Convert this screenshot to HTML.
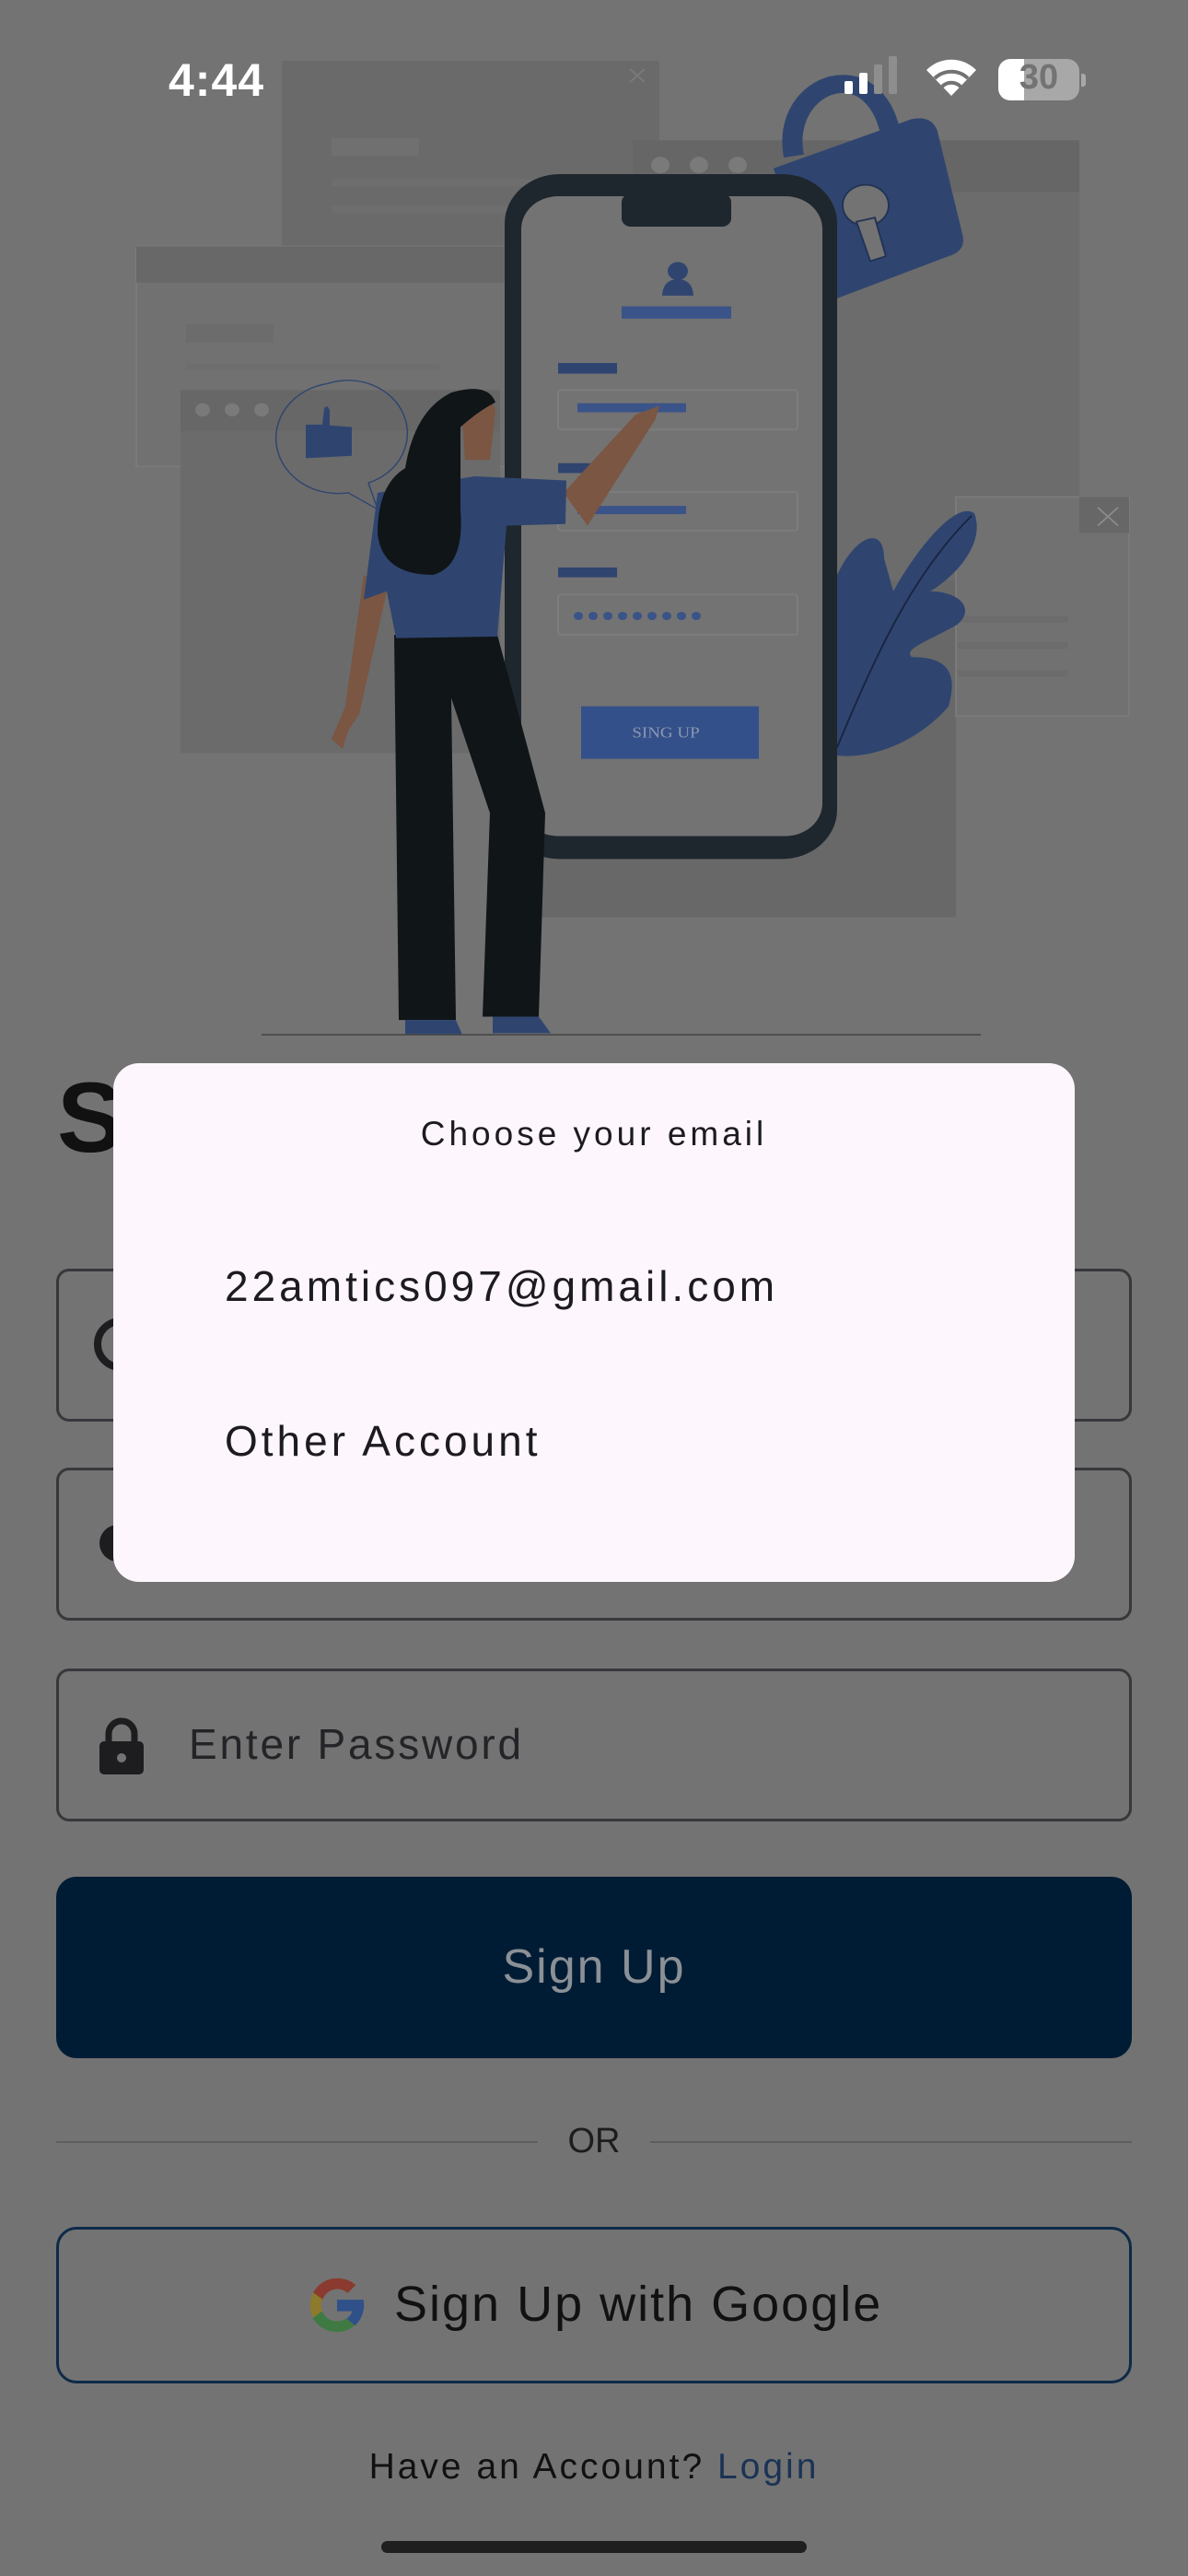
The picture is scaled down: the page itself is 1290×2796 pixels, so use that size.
<!DOCTYPE html>
<html><head><meta charset="utf-8"><style>
*{margin:0;padding:0;box-sizing:border-box}
body{width:1290px;height:2796px;background:#737373;position:relative;overflow:hidden;font-family:"Liberation Sans",sans-serif}
.abs{position:absolute}
.field{position:absolute;left:61px;width:1168px;border:3px solid #38383c;border-radius:14px}
</style></head><body>
<svg class="abs" style="left:0;top:0" width="1290" height="1300" viewBox="0 0 1290 1300">
<g transform="scale(1,0.8914)">
 <rect x="306" y="74" width="410" height="226" fill="#6a6a6a"/>
 <rect x="360" y="168" width="95" height="22" fill="#707070"/>
 <rect x="360" y="218" width="300" height="9" fill="#6e6e6e"/>
 <rect x="360" y="250" width="300" height="9" fill="#6e6e6e"/>
 <path d="M684 84 L700 100 M700 84 L684 100" stroke="#7a7a7a" stroke-width="2"/>
 <rect x="148" y="300" width="411" height="268" fill="#717171" stroke="#7a7a7a" stroke-width="2"/>
 <rect x="148" y="300" width="411" height="44" fill="#686868"/>
 <rect x="202" y="395" width="95" height="22" fill="#6c6c6c"/>
 <rect x="202" y="443" width="275" height="8" fill="#6e6e6e"/>
 <rect x="196" y="475" width="347" height="442" fill="#6b6b6b"/>
 <rect x="196" y="475" width="347" height="50" fill="#676767"/>
 <circle cx="220" cy="499" r="8" fill="#7a7a7a"/><circle cx="252" cy="499" r="8" fill="#7a7a7a"/><circle cx="284" cy="499" r="8" fill="#7a7a7a"/>
 <rect x="687" y="171" width="485" height="541" fill="#6c6c6c"/>
 <rect x="687" y="171" width="485" height="63" fill="#666"/>
 <circle cx="717" cy="201" r="10" fill="#7a7a7a"/><circle cx="759" cy="201" r="10" fill="#7a7a7a"/><circle cx="801" cy="201" r="10" fill="#7a7a7a"/>
 <rect x="576" y="707" width="462" height="410" fill="#686868"/>
 <rect x="1038" y="605" width="188" height="267" fill="#717171" stroke="#7a7a7a" stroke-width="2"/>
 <rect x="1172" y="605" width="54" height="44" fill="#676767"/>
 <path d="M1192 618 L1214 640 M1214 618 L1192 640" stroke="#8a8a8a" stroke-width="2"/>
 <rect x="1040" y="750" width="120" height="8" fill="#6c6c6c"/><rect x="1040" y="782" width="120" height="8" fill="#6c6c6c"/><rect x="1040" y="816" width="120" height="8" fill="#6c6c6c"/>
 <path d="M862 190 C850 120 910 80 945 115 C960 130 965 150 970 175" fill="none" stroke="#2f4570" stroke-width="22"/>
 <path d="M840 205 L990 145 Q1012 140 1018 160 L1045 285 Q1050 305 1030 312 L905 365 Q885 372 880 350 Z" fill="#2f4570"/>
 <circle cx="940" cy="250" r="25" fill="#737373" stroke="#223355" stroke-width="2"/>
 <path d="M930 270 L945 318 L962 312 L950 265 Z" fill="#737373" stroke="#223355" stroke-width="2"/>
 <path d="M909 700 C930 650 960 640 960 680 L970 720 C1000 660 1040 610 1058 625 C1070 660 1040 700 1010 720 C1040 720 1060 740 1040 760 C1010 780 980 790 990 800 C1030 800 1040 820 1030 860 C1000 900 950 925 909 920 Z" fill="#2f4570"/>
 <path d="M909 910 C950 800 990 700 1055 628" stroke="#1a2540" stroke-width="2" fill="none"/>
 <rect x="548" y="212" width="361" height="834" rx="60" fill="#1f272e"/>
 <rect x="566" y="239" width="327" height="779" rx="40" fill="#737373"/>
 <rect x="675" y="236" width="119" height="40" rx="10" fill="#1f272e"/>
 <circle cx="736" cy="330" r="11" fill="#2f4570"/>
 <path d="M719 360 Q720 340 736 340 Q752 340 753 360 Z" fill="#2f4570"/>
 <rect x="675" y="373" width="119" height="15" fill="#3a5388"/>
 <rect x="606" y="442" width="64" height="13" fill="#2f4570"/>
 <rect x="606" y="475" width="260" height="48" rx="3" fill="none" stroke="#7d7d7d" stroke-width="2"/>
 <rect x="627" y="491" width="118" height="11" fill="#3a5388"/>
 <rect x="606" y="564" width="64" height="12" fill="#2f4570"/>
 <rect x="606" y="599" width="260" height="47" rx="3" fill="none" stroke="#7d7d7d" stroke-width="2"/>
 <rect x="627" y="616" width="118" height="10" fill="#3a5388"/>
 <rect x="606" y="691" width="64" height="12" fill="#2f4570"/>
 <rect x="606" y="724" width="260" height="49" rx="3" fill="none" stroke="#7d7d7d" stroke-width="2"/>
 <g fill="#3a5388"><circle cx="628" cy="750" r="5"/><circle cx="644" cy="750" r="5"/><circle cx="660" cy="750" r="5"/><circle cx="676" cy="750" r="5"/><circle cx="692" cy="750" r="5"/><circle cx="708" cy="750" r="5"/><circle cx="724" cy="750" r="5"/><circle cx="740" cy="750" r="5"/><circle cx="756" cy="750" r="5"/></g>
 <rect x="631" y="860" width="193" height="64" fill="#34508a"/>
 <text x="723" y="898" font-family="Liberation Serif,serif" font-size="19" fill="#8a97b3" text-anchor="middle">SING UP</text>
 <path d="M356 467 A64 64 0 1 1 400 588 L410 620 L378 600 A64 64 0 0 1 356 467 Z" fill="none" stroke="#2f4570" stroke-width="1.5"/>
 <path d="M332 517 L350 517 L352 497 Q356 492 358 500 L358 518 L382 520 L382 555 L332 558 Z" fill="#2f4570"/>
 <path d="M395 700 L375 860 L360 900 L372 912 L378 890 L390 870 L420 720 Z" fill="#7a5643"/>
 <path d="M612 600 L690 505 L716 494 L712 510 L638 640 Z" fill="#7a5643"/>
 <path d="M428 773 L433 1242 L495 1242 L490 850 L532 990 L524 1238 L585 1238 L592 990 L540 773 Z" fill="#101518"/>
 <path d="M440 1242 L495 1242 L502 1260 L440 1260 Z M535 1238 L585 1238 L598 1258 L535 1258 Z" fill="#2f4570"/>
 <path d="M410 600 L515 580 L615 585 L614 638 L550 640 L540 775 L430 777 L420 720 L395 730 Z" fill="#2f4570"/>
 <path d="M500 480 Q530 470 538 500 L532 560 L505 560 Z" fill="#7a5643"/>
 <path d="M490 478 Q530 465 538 490 Q520 500 500 520 L500 620 Q505 690 470 700 Q415 700 410 650 Q410 590 440 570 Q450 500 490 478 Z" fill="#101518"/>
 <line x1="284" y1="1260" x2="1065" y2="1260" stroke="#4a4a4a" stroke-width="2"/>
</g>
</svg>
<div class="abs" style="left:183px;top:58px;font-size:50px;font-weight:bold;color:#fff;letter-spacing:1px">4:44</div>
<div class="abs" style="left:917px;top:88px;width:9px;height:14px;background:#fff;border-radius:2px"></div>
<div class="abs" style="left:933px;top:79px;width:9px;height:23px;background:#fff;border-radius:2px"></div>
<div class="abs" style="left:949px;top:70px;width:9px;height:32px;background:#8e8e8e;border-radius:2px"></div>
<div class="abs" style="left:965px;top:61px;width:9px;height:41px;background:#8e8e8e;border-radius:2px"></div>
<svg class="abs" style="left:1002px;top:60px" width="62" height="46" viewBox="0 0 62 46"><path d="M31 44 L4 16 A38 38 0 0 1 58 16 Z" fill="#fff"/><path d="M13 25 A26 26 0 0 1 49 25" stroke="#737373" stroke-width="4" fill="none"/><path d="M21 34 A14 14 0 0 1 41 34" stroke="#737373" stroke-width="4" fill="none"/></svg>
<div class="abs" style="left:1084px;top:64px;width:88px;height:45px;border-radius:13px;background:linear-gradient(90deg,#fff 0 32%,#a8a8a8 32%);"></div>
<div class="abs" style="left:1174px;top:80px;width:5px;height:14px;background:#a8a8a8;border-radius:0 3px 3px 0"></div>
<div class="abs" style="left:1084px;top:63px;width:88px;text-align:center;font-size:38px;font-weight:bold;color:#737373">30</div>
<div class="abs" style="left:62px;top:1150px;font-size:108px;font-weight:bold;color:#111">S</div>
<div class="field" style="top:1377px;height:166px"></div>
<div class="abs" style="left:102px;top:1430px;width:58px;height:58px;border:8px solid #1d1d20;border-radius:50%"></div>
<div class="field" style="top:1593px;height:166px"></div>
<div class="abs" style="left:108px;top:1655px;width:40px;height:40px;border-radius:50%;background:#1d1d20"></div>
<div class="field" style="top:1811px;height:166px"></div>
<svg class="abs" style="left:104px;top:1864px" width="56" height="64" viewBox="0 0 56 64"><path d="M14 28 V18 A14 14 0 0 1 42 18 V28" stroke="#1d1d20" stroke-width="7" fill="none"/><rect x="4" y="26" width="48" height="36" rx="5" fill="#1d1d20"/><circle cx="28" cy="44" r="5" fill="#737373"/></svg>
<div class="abs" style="left:205px;top:1866px;font-size:46px;color:#242428;letter-spacing:2.8px">Enter Password</div>
<div class="abs" style="left:61px;top:2037px;width:1168px;height:197px;background:#001c35;border-radius:22px;text-align:center;line-height:197px;font-size:52px;color:#8b9096;letter-spacing:2px">Sign Up</div>
<div class="abs" style="left:61px;top:2324px;width:523px;height:2px;background:#5e5e5e"></div>
<div class="abs" style="left:706px;top:2324px;width:523px;height:2px;background:#5e5e5e"></div>
<div class="abs" style="left:584px;top:2303px;width:122px;text-align:center;font-size:38px;color:#1d1d20">OR</div>
<div class="abs" style="left:61px;top:2417px;width:1168px;height:170px;border:3px solid #0e2a48;border-radius:22px"></div>
<svg class="abs" style="left:331px;top:2467px" width="70" height="70" viewBox="0 0 48 48"><path d="M6.3 14.7l7 5.1C15.1 15.1 19.2 12 24 12c3.1 0 5.8 1.1 7.9 3l6-6C34.3 5.7 29.4 4 24 4 16.3 4 9.7 8.3 6.3 14.7z" fill="#8a3a2e"/><path d="M24 44c5.2 0 9.9-2 13.4-5.2l-6.2-5.2C29.2 35.1 26.7 36 24 36c-5.2 0-9.6-3.3-11.3-8l-6.9 5.3C9.5 39.6 16.2 44 24 44z" fill="#3f7a43"/><path d="M6.3 14.7C4.8 17.5 4 20.7 4 24s.8 6.6 2.3 9.4l6.9-5.3C12.4 26.9 12 25.5 12 24s.4-2.9 1.3-4.2z" fill="#8d7a2c"/><path d="M43.6 20H24v8.5h11.3c-.8 2.2-2.2 4.1-4.1 5.5l6.2 5.2C41.4 35.6 44 30.2 44 24c0-1.3-.1-2.7-.4-4z" fill="#30508a"/></svg>
<div class="abs" style="left:428px;top:2470px;font-size:54px;color:#111;letter-spacing:2px">Sign Up with Google</div>
<div class="abs" style="left:0;width:1290px;top:2656px;text-align:center;font-size:39px;color:#111;letter-spacing:3px">Have an Account? <span style="color:#1a3355">Login</span></div>
<div class="abs" style="left:414px;top:2758px;width:462px;height:13px;border-radius:7px;background:#1f1f1f"></div>
<div class="abs" style="left:123px;top:1154px;width:1044px;height:563px;background:#fdf7fd;border-radius:28px"></div>
<div class="abs" style="left:123px;top:1210px;width:1044px;text-align:center;font-size:37px;color:#1d1b20;letter-spacing:4px">Choose your email</div>
<div class="abs" style="left:244px;top:1369px;font-size:46px;color:#1d1b20;letter-spacing:4px">22amtics097@gmail.com</div>
<div class="abs" style="left:244px;top:1537px;font-size:46px;color:#1d1b20;letter-spacing:4px">Other Account</div>
</body></html>
